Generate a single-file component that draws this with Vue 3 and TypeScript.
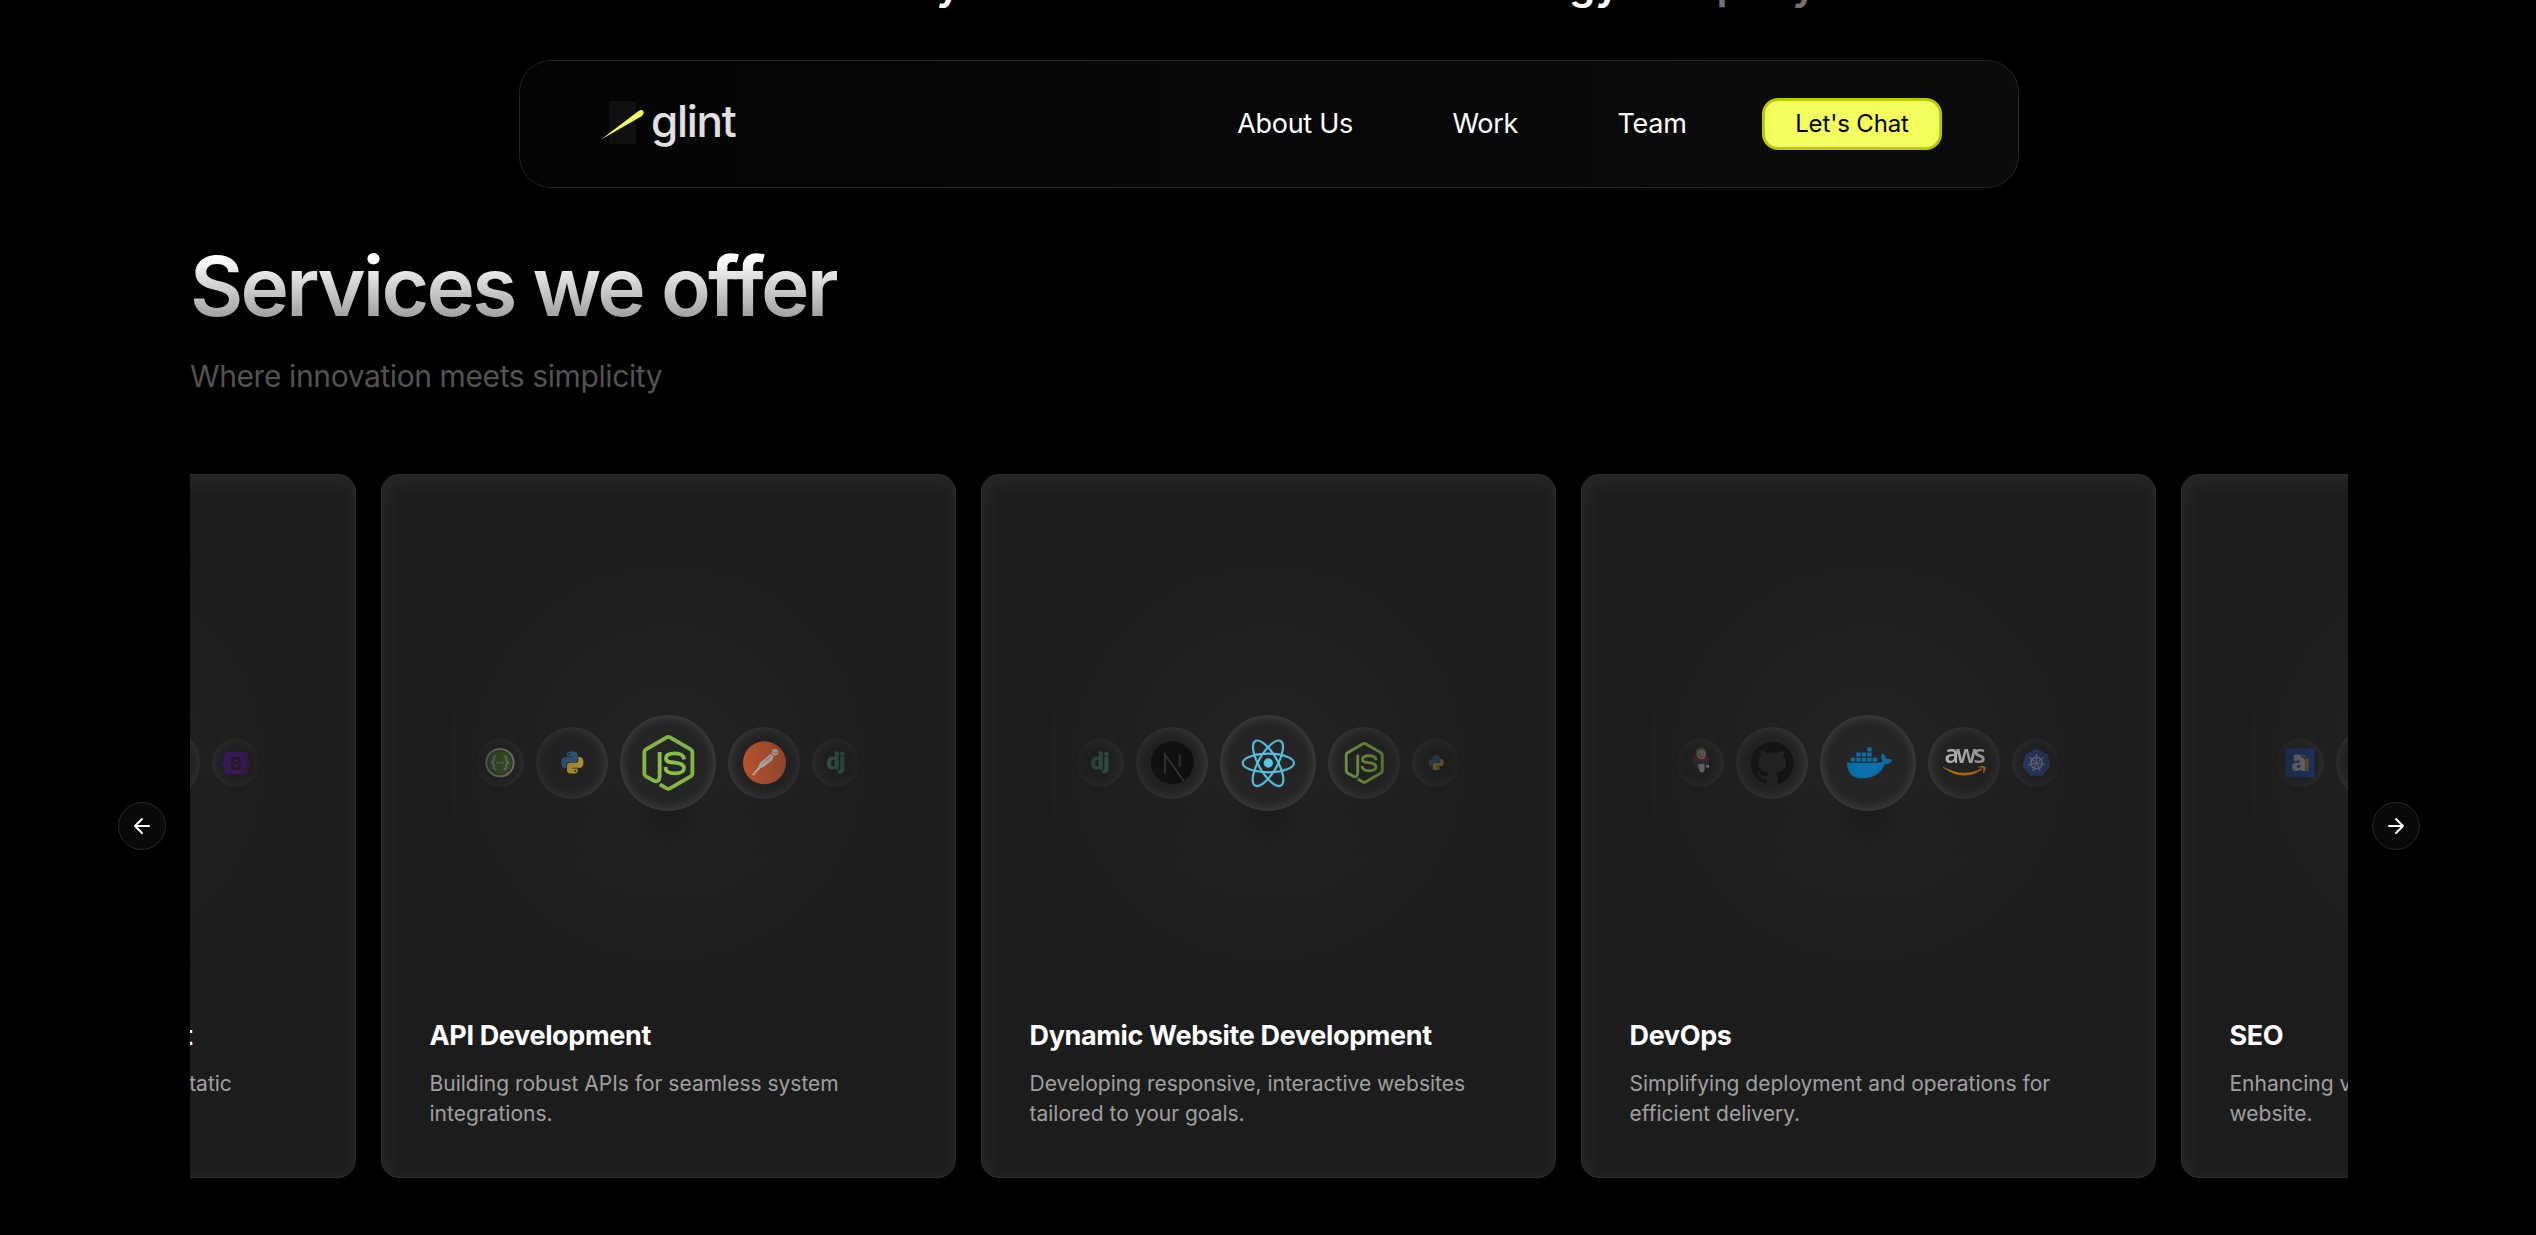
<script setup lang="ts">
interface Service {
  title: string
  lines: string[]
  icons: string[]
}

const sizes = [48, 72, 96, 72, 48]

const links: string[] = ['About Us', 'Work', 'Team']

const services: Service[] = [
  {
    title: 'Static Website Development',
    lines: ['Designing fast, reliable and secure static', 'websites for your brand.'],
    icons: ['', '', '', '', 'bootstrap'],
  },
  {
    title: 'API Development',
    lines: ['Building robust APIs for seamless system', 'integrations.'],
    icons: ['swagger', 'python', 'node', 'postman', 'django'],
  },
  {
    title: 'Dynamic Website Development',
    lines: ['Developing responsive, interactive websites', 'tailored to your goals.'],
    icons: ['django', 'next', 'react', 'node', 'python'],
  },
  {
    title: 'DevOps',
    lines: ['Simplifying deployment and operations for', 'efficient delivery.'],
    icons: ['jenkins', 'github', 'docker', 'aws', 'kubernetes'],
  },
  {
    title: 'SEO',
    lines: ['Enhancing visibility and ranking of your', 'website.'],
    icons: ['analytics', '', '', '', ''],
  },
]

const pythonTop =
  'M14.25.18l.9.2.73.26.59.3.45.32.34.34.25.34.16.33.1.3.04.26.02.2-.01.13V8.5l-.05.63-.13.55-.21.46-.26.38-.3.31-.33.25-.35.19-.35.14-.33.1-.3.07-.26.04-.21.02H8.77l-.69.05-.59.14-.5.22-.41.27-.33.32-.27.35-.2.36-.15.37-.1.35-.07.32-.04.27-.02.21v3.06H3.17l-.21-.03-.28-.07-.32-.12-.35-.18-.36-.26-.36-.36-.35-.46-.32-.59-.28-.73-.21-.88-.14-1.05-.05-1.23.06-1.22.16-1.04.24-.87.32-.71.36-.57.4-.44.42-.33.42-.24.4-.16.36-.1.32-.05.24-.01h.16l.06.01h8.16v-.83H6.18l-.01-2.75-.02-.37.05-.34.11-.31.17-.28.25-.26.31-.23.38-.2.44-.18.51-.15.58-.12.64-.1.71-.06.77-.04.84-.02 1.27.05zm-6.3 1.98l-.23.33-.08.41.08.41.23.34.33.22.41.09.41-.09.33-.22.23-.34.08-.41-.08-.41-.23-.33-.33-.22-.41-.09-.41.09z'
const pythonBottom =
  'M21.04 6.11l.28.06.32.12.35.18.36.27.36.35.35.47.32.59.28.73.21.88.14 1.04.05 1.23-.06 1.23-.16 1.04-.24.86-.32.71-.36.57-.4.45-.42.33-.42.24-.4.16-.36.09-.32.05-.24.02-.16-.01h-8.22v.82h5.84l.01 2.76.02.36-.05.34-.11.31-.17.29-.25.25-.31.24-.38.2-.44.17-.51.15-.58.13-.64.09-.71.07-.77.04-.84.01-1.27-.04-1.07-.14-.9-.2-.73-.25-.59-.3-.45-.33-.34-.34-.25-.34-.16-.33-.1-.3-.04-.25-.02-.2.01-.13v-5.34l.05-.64.13-.54.21-.46.26-.38.3-.32.33-.24.35-.2.35-.14.33-.1.3-.06.26-.04.21-.02.13-.01h5.84l.69-.05.59-.14.5-.21.41-.28.33-.32.27-.35.2-.36.15-.36.1-.35.07-.32.04-.28.02-.21V6.07h2.09l.14.01zm-6.47 14.25l-.23.33-.08.41.08.41.23.33.33.23.41.08.41-.08.33-.23.23-.33.08-.41-.08-.41-.23-.33-.33-.23-.41-.08-.41.08z'
const githubMark =
  'M8 0C3.58 0 0 3.58 0 8c0 3.54 2.29 6.53 5.47 7.59.4.07.55-.17.55-.38 0-.19-.01-.82-.01-1.49-2.01.37-2.53-.49-2.69-.94-.09-.23-.48-.94-.82-1.13-.28-.15-.68-.52-.01-.53.63-.01 1.08.58 1.23.82.72 1.21 1.87.87 2.33.66.07-.52.28-.87.51-1.07-1.78-.2-3.64-.89-3.64-3.95 0-.87.31-1.59.82-2.15-.08-.2-.36-1.02.08-2.12 0 0 .67-.21 2.2.82.64-.18 1.32-.27 2-.27s1.36.09 2 .27c1.53-1.04 2.2-.82 2.2-.82.44 1.1.16 1.92.08 2.12.51.56.82 1.27.82 2.15 0 3.07-1.87 3.75-3.65 3.95.29.25.54.73.54 1.48 0 1.07-.01 1.93-.01 2.2 0 .21.15.46.55.38A8.01 8.01 0 0 0 16 8c0-4.42-3.58-8-8-8z'

const dockerBoxes: number[][] = [
  [-52, -16], [-35.5, -16], [-19, -16], [-2.5, -16], [14, -16],
  [-35.5, -31.5], [-19, -31.5], [-2.5, -31.5],
  [-2.5, -47],
]

const spokes = [0, 1, 2, 3, 4, 5, 6].map((i) => (i * 360) / 7)

const heptagon = spokes
  .map((deg) => {
    const a = (deg * Math.PI) / 180
    return `${(80 * Math.sin(a)).toFixed(1)},${(-80 * Math.cos(a)).toFixed(1)}`
  })
  .join(' ')
</script>

<template>
  <div class="page">
    <p class="tagline">
      <span>community</span>
      <span>technology</span>
      <span class="dim">company</span>
    </p>

    <nav class="nav">
      <a class="logo">
        <svg class="logo-mark" width="45" height="43" viewBox="0 0 45 43">
          <rect x="8" y="0" width="27" height="43" fill="#101010" />
          <path d="M0 38.6L37.6 10.1Q40.6 8.2 42.2 9.8Q43.6 12.4 41 14.9Z" fill="#f3ff5c" />
        </svg>
        <span class="logo-text">glint</span>
      </a>
      <div class="links">
        <a v-for="link in links" :key="link" class="link">{{ link }}</a>
        <button class="chat">Let's Chat</button>
      </div>
    </nav>

    <main class="content">
      <h1 class="heading">Services we offer</h1>
      <p class="sub">Where innovation meets simplicity</p>

      <div class="carousel">
        <button class="arrow" aria-label="Previous">
          <svg width="24" height="24" viewBox="0 0 24 24" class="arrow-icon"><path d="m12 19-7-7 7-7M19 12H5" /></svg>
        </button>

        <div class="viewport">
          <div class="track">
            <article v-for="service in services" :key="service.title" class="card">
              <div class="showcase">
                <div class="beam"></div>
                <div
                  v-for="(icon, i) in service.icons"
                  :key="i"
                  class="orb"
                  :style="{ width: sizes[i] + 'px', height: sizes[i] + 'px' }"
                >
                  <svg class="glyph" viewBox="-144 -144 288 288">
                    <g v-if="icon === 'node'" fill="none" stroke="#8cc84b" stroke-width="11.5" stroke-linejoin="round">
                      <path d="M-25 -33V37Q-25 60 -43 53L-66 40Q-71 37 -71 32V-33Q-71 -38 -66 -41L-4 -77Q1 -80 6 -77L68 -41Q73 -38 73 -33V32Q73 37 68 40L6 76Q1 79 -4 76L-25 64" />
                      <path d="M48 -11C47 -26 37 -29 20 -29C3 -29 -6 -26 -6 -15C-6 -3 4 -3 20 -1C40 1 48 5 48 15C48 28 38 31 20 31C2 31 -7 27 -8 12" />
                    </g>
                    <g v-else-if="icon === 'react'" fill="none" stroke="#58c9e8" stroke-width="6.5">
                      <ellipse rx="77" ry="28" cx="1" />
                      <ellipse rx="77" ry="28" cx="1" transform="rotate(60)" />
                      <ellipse rx="77" ry="28" cx="1" transform="rotate(120)" />
                      <circle r="14" cx="1" fill="#58c9e8" stroke="none" />
                    </g>
                    <g v-else-if="icon === 'docker'" fill="#0a73b0">
                      <rect v-for="(b, n) in dockerBoxes" :key="n" :x="b[0]" :y="b[1]" width="13.5" height="12" />
                      <path d="M-63 -1H30Q40 -2 44 -6Q35 -18 43 -29Q52 -23 54 -12Q64 -14 73 -9Q67 4 50 4Q34 46 -17 46Q-62 46 -63 -1Z" />
                    </g>
                    <g v-else-if="icon === 'python'" transform="translate(-43 -46) scale(3.68)">
                      <path :d="pythonTop" fill="#3776ab" />
                      <path :d="pythonBottom" fill="#ffd43b" />
                    </g>
                    <g v-else-if="icon === 'github'" transform="translate(-85 -84) scale(10.7)">
                      <path :d="githubMark" fill="#0e0e0c" />
                    </g>
                    <g v-else-if="icon === 'postman'">
                      <circle r="86" cx="2" cy="-1" fill="#ff6c37" />
                      <circle r="13" cx="44" cy="-43" fill="#fff" />
                      <path d="M26 -37L39 -25L32 -10L-6 18L-22 10L-14 -2Z" fill="#fff" />
                      <path d="M-16 8L-44 44L-48 46L-36 48L-38 43L-8 14Z" fill="#fff" stroke="#fff" stroke-width="2" />
                      <path d="M28 -26L-10 6M34 -46L44 -40L54 -44" fill="none" stroke="#ff6c37" stroke-width="3" />
                    </g>
                    <g v-else-if="icon === 'swagger'">
                      <circle r="82" cy="-2" fill="#4f8a2e" stroke="#fff" stroke-width="12" />
                      <circle r="72" cy="-2" fill="#5aa82a" stroke="#2f6b1e" stroke-width="5" />
                      <g fill="none" stroke="#fff" stroke-width="10">
                        <path d="M-22 -42Q-38 -44 -37 -28Q-36 -4 -52 -2Q-36 0 -37 24Q-38 40 -22 38" />
                        <path d="M22 -42Q38 -44 37 -28Q36 -4 52 -2Q36 0 37 24Q38 40 22 38" />
                      </g>
                      <g fill="#fff">
                        <circle cx="-18" cy="-2" r="5.5" />
                        <circle cx="0" cy="-2" r="5.5" />
                        <circle cx="18" cy="-2" r="5.5" />
                      </g>
                    </g>
                    <text v-else-if="icon === 'django'" class="dj" x="0" y="36" text-anchor="middle">dj</text>
                    <g v-else-if="icon === 'next'">
                      <circle r="86" cx="1" cy="-1" fill="#080808" />
                      <path d="M-28 41V-33L47 72" fill="none" stroke="#444" stroke-width="7" />
                      <path d="M31 -34V16" stroke="#3c3c3c" stroke-width="7" />
                    </g>
                    <g v-else-if="icon === 'aws'">
                      <text class="aws" x="-78" y="1">aws</text>
                      <path d="M-84 15Q-4 60 68 22Q75 20 72 27Q-4 78 -84 18Z" fill="#f90" />
                      <path d="M54 17Q74 8 86 15Q90 28 77 42Q74 42 78 22Q72 17 54 19Z" fill="#f90" />
                    </g>
                    <g v-else-if="icon === 'kubernetes'" transform="translate(3 0)">
                      <polygon :points="heptagon" fill="#326ce5" stroke="#326ce5" stroke-width="10" stroke-linejoin="round" />
                      <circle r="34" fill="none" stroke="#fff" stroke-width="9" />
                      <path v-for="s in spokes" :key="s" d="M0 -8V-54" stroke="#fff" stroke-width="7" :transform="`rotate(${s})`" />
                      <circle r="8" fill="#fff" />
                    </g>
                    <g v-else-if="icon === 'jenkins'" transform="translate(4 0)">
                      <ellipse cx="0" cy="-20" rx="52" ry="34" fill="#a8302a" />
                      <path d="M-50 -14Q-20 -26 10 -16L48 -8Q54 10 38 24L10 34L-36 26Z" fill="#335061" />
                      <path d="M-28 -66Q-24 -90 4 -90Q34 -86 32 -56Q30 -26 4 -22Q-26 -28 -28 -66Z" fill="#f0d6b7" />
                      <path d="M-30 -54Q-34 -88 2 -91Q26 -88 30 -66Q16 -84 -12 -76Q-22 -70 -22 -48Z" fill="#8f7d68" />
                      <path d="M-12 -52H-2M10 -52H20M-2 -38H14" stroke="#5c4636" stroke-width="4" />
                      <path d="M-8 -20L6 -12L20 -20V-4L6 -10L-8 -4Z" fill="#d33833" />
                      <path d="M-16 8L22 4L24 40L14 58L-4 54L-12 34Z" fill="#fff" />
                      <path d="M32 12H50V28H34Z" fill="#fff" />
                      <path d="M-46 26L-18 30L-10 50L-28 42Z" fill="#24343f" />
                    </g>
                    <g v-else-if="icon === 'bootstrap'">
                      <path d="M-56 -68H56Q68 -68 69 -54V-32Q70 -8 87 0Q70 8 69 32V54Q68 68 56 68H-56Q-68 68 -69 54V32Q-70 8 -87 0Q-70 -8 -69 -32V-54Q-68 -68 -56 -68Z" fill="#7b11d2" />
                      <text class="bs" x="0" y="39" text-anchor="middle">B</text>
                    </g>
                    <g v-else-if="icon === 'analytics'">
                      <rect x="-87" y="-88" width="174" height="174" fill="#1c57d8" />
                      <path d="M-38 -42H6" stroke="#fff" stroke-width="16" />
                      <path d="M6 -46H32V50H52V-28H32" fill="#ff9a1f" />
                      <text class="an" x="-54" y="49">a</text>
                    </g>
                  </svg>
                </div>
              </div>
              <h3 class="card-title">{{ service.title }}</h3>
              <p class="card-text">
                <template v-for="(line, n) in service.lines" :key="n"><br v-if="n > 0" />{{ line }}</template>
              </p>
            </article>
          </div>
        </div>

        <button class="arrow" aria-label="Next">
          <svg width="24" height="24" viewBox="0 0 24 24" class="arrow-icon"><path d="M5 12h14M12 5l7 7-7 7" /></svg>
        </button>
      </div>
    </main>
  </div>
</template>

<style>
body {
  background: #000;
}
</style>

<style scoped>
.page {
  width: 2536px;
  height: 1235px;
  overflow: hidden;
  background: #000;
  font-family: Inter, "Liberation Sans", sans-serif;
  color: #fff;
}

.tagline {
  display: grid;
  grid-template-columns: 961px 659px 197px;
  height: 54px;
  margin: -43px 0 49px;
  font-size: 42px;
  line-height: 54px;
  font-weight: 600;
  text-align: right;
}

.dim {
  color: #737373;
}

.nav {
  box-sizing: border-box;
  width: 1500px;
  height: 128px;
  margin: 0 0 0 519px;
  padding: 0 76px 0 81px;
  display: flex;
  align-items: center;
  justify-content: space-between;
  border: 1px solid #242424;
  border-radius: 32px;
  background: linear-gradient(90deg, #040404, #0b0b0b);
}

.logo {
  display: flex;
  align-items: center;
  gap: 5px;
}

.logo-mark {
  display: block;
  margin-top: -3px;
}

.logo-text {
  font-size: 44px;
  line-height: 54px;
  font-weight: 500;
  letter-spacing: -1.3px;
  color: #e0e0e0;
  margin-top: -7px;
}

.links {
  display: flex;
  align-items: center;
}

.link {
  font-size: 27px;
  line-height: 42px;
  letter-spacing: -0.3px;
  margin-right: 99.5px;
}

.link:nth-child(3) {
  margin-right: 75.5px;
}

.chat {
  box-sizing: border-box;
  width: 180px;
  height: 52px;
  padding: 0;
  border: 3px solid #b9ca00;
  border-radius: 16px;
  background: #f3ff5c;
  color: #000;
  font-family: inherit;
  font-size: 24px;
  line-height: 36px;
  letter-spacing: -0.15px;
}

.content {
  padding: 49px 118px 0;
}

.heading {
  display: table;
  margin: 0 0 0 72px;
  font-size: 82px;
  line-height: 100px;
  font-weight: 600;
  letter-spacing: -2.75px;
  background: linear-gradient(180deg, #fff 20%, #949494 88%);
  background-clip: text;
  -webkit-background-clip: text;
  color: transparent;
}

.sub {
  margin: 18px 0 77px 72px;
  font-size: 30px;
  line-height: 42px;
  letter-spacing: -0.4px;
  color: #525252;
}

.carousel {
  display: flex;
  align-items: center;
  gap: 24px;
}

.arrow {
  box-sizing: border-box;
  flex: none;
  width: 48px;
  height: 48px;
  padding: 0;
  display: flex;
  align-items: center;
  justify-content: center;
  border: 1px solid #27272a;
  border-radius: 50%;
  background: #09090b;
}

.arrow-icon {
  fill: none;
  stroke: #fff;
  stroke-width: 2;
  stroke-linecap: round;
  stroke-linejoin: round;
}

.viewport {
  flex: none;
  width: 2158px;
  overflow: hidden;
}

.track {
  display: flex;
  gap: 24.5px;
  margin-left: -409.5px;
}

.card {
  box-sizing: border-box;
  flex: none;
  width: 575.5px;
  height: 704px;
  padding: 48px;
  border: 1px solid #303030;
  border-radius: 18px;
  background: #1c1c1c;
  box-shadow: inset 3px 6px 24px 0 rgba(248, 248, 248, 0.06);
}

.showcase {
  position: relative;
  height: 480px;
  display: flex;
  align-items: center;
  justify-content: center;
  gap: 12px;
  background: rgba(40, 40, 40, 0.7);
  -webkit-mask-image: radial-gradient(50% 50% at 50% 50%, #fff 0%, transparent 100%);
  mask-image: radial-gradient(50% 50% at 50% 50%, #fff 0%, transparent 100%);
}

.beam {
  position: absolute;
  top: 120px;
  left: 24px;
  width: 1.5px;
  height: 240px;
  background: linear-gradient(180deg, transparent, #06b6d4, transparent);
}

.orb {
  flex: none;
  border-radius: 50%;
  background: rgba(248, 248, 248, 0.01);
  box-shadow:
    inset 0 0 12px 0 rgba(248, 248, 248, 0.25),
    0 48px 36px -24px rgba(0, 0, 0, 0.4);
}

.glyph {
  display: block;
  width: 100%;
  height: 100%;
}

.dj {
  font-family: Lato, sans-serif;
  font-size: 134px;
  font-weight: 900;
  fill: #44b78b;
  stroke: #44b78b;
  stroke-width: 5px;
}

.aws {
  font-family: "Open Sans", sans-serif;
  font-size: 100px;
  font-weight: 600;
  letter-spacing: -12px;
  fill: #fff;
}

.bs {
  font-family: Inter, sans-serif;
  font-size: 108px;
  font-weight: 700;
  fill: #222;
}

.an {
  font-family: "Open Sans", sans-serif;
  font-size: 150px;
  font-weight: 800;
  fill: #fff;
}

.card-title {
  margin: 0;
  padding: 12px 0;
  font-size: 27px;
  line-height: 42px;
  font-weight: 700;
  letter-spacing: -0.36px;
  white-space: nowrap;
}

.card-text {
  margin: 0;
  font-size: 21px;
  line-height: 30px;
  color: #a0a0a0;
  white-space: nowrap;
}
</style>
